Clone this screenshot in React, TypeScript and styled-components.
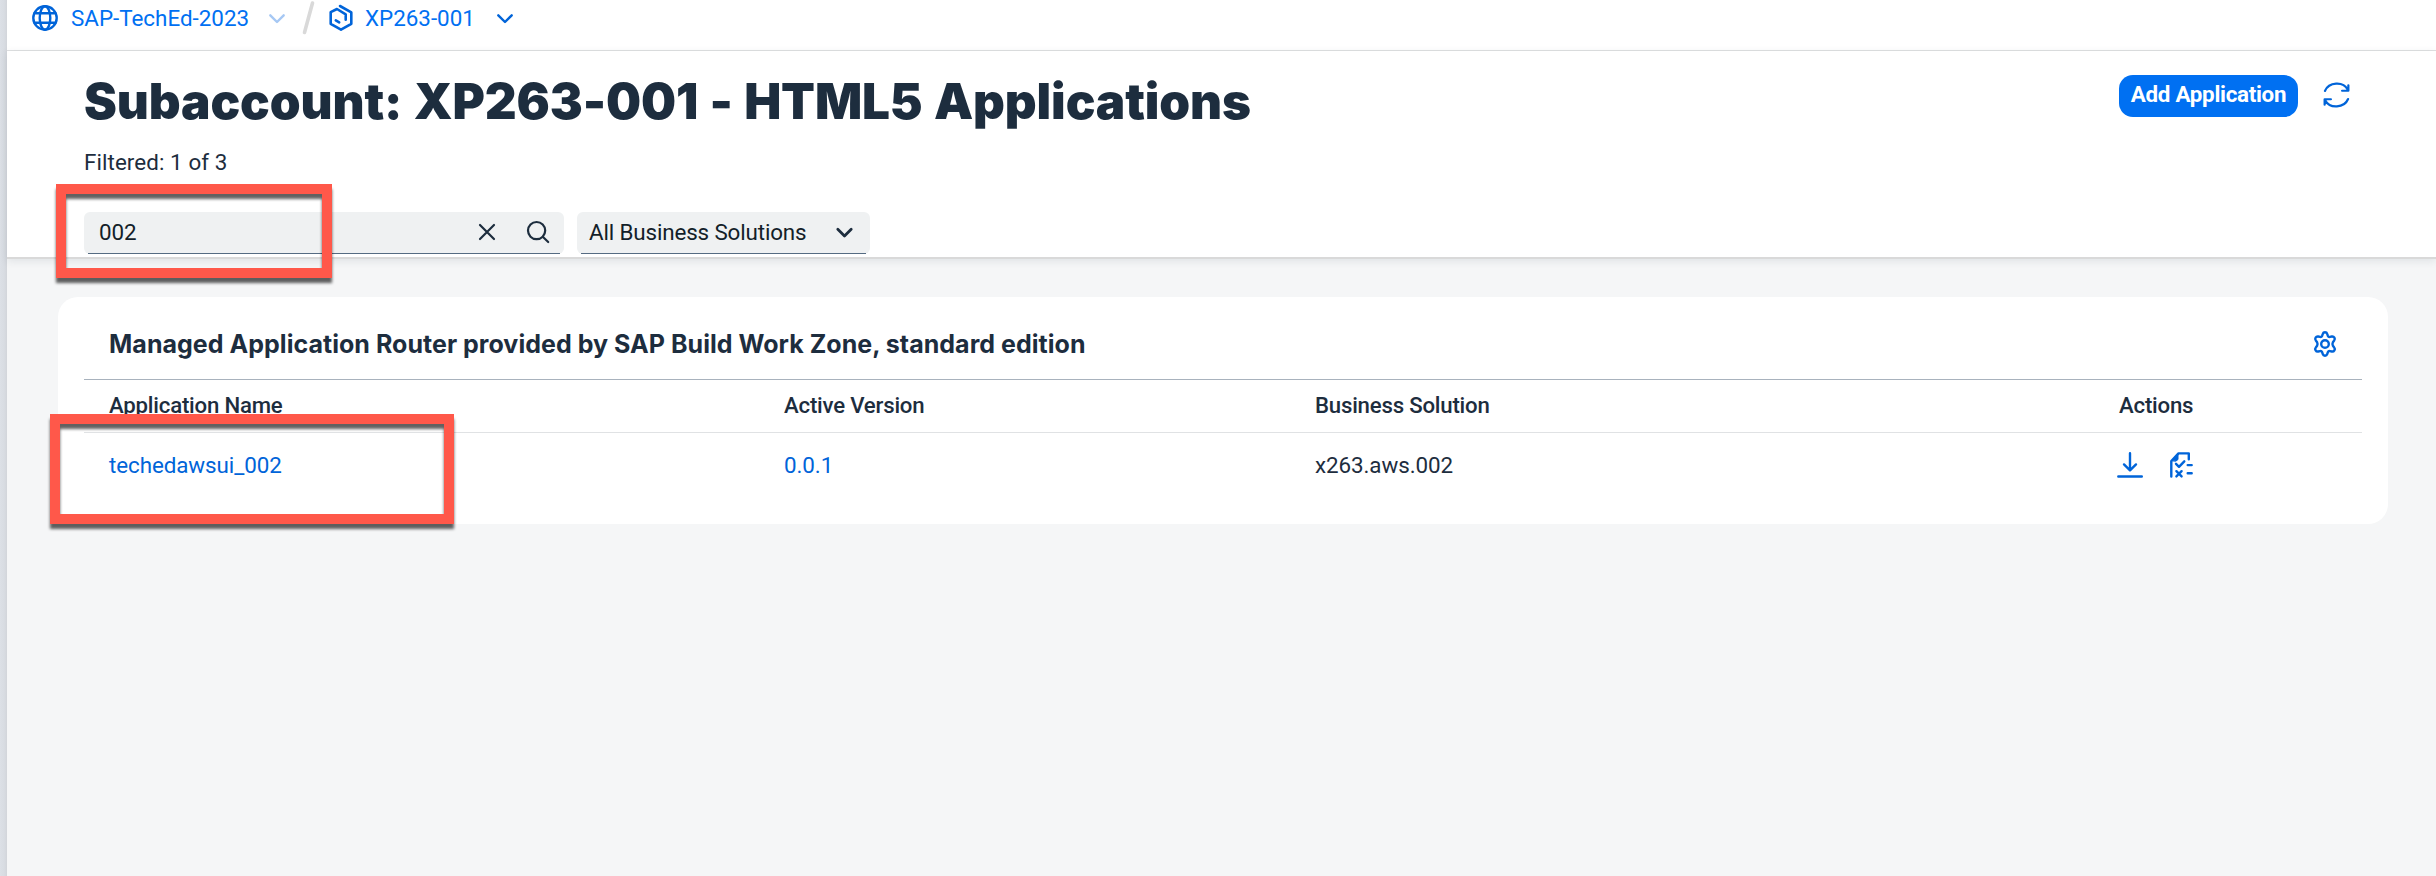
import React from 'react';
import styled, { createGlobalStyle } from 'styled-components';

const Global = createGlobalStyle`
  * { box-sizing: border-box; }
  body { margin: 0; background: #f5f6f7; }
`;

const Shell = styled.div`
  position: relative;
  display: flex;
  width: 2436px;
  height: 876px;
  overflow: hidden;
  background: #f5f6f7;
  font-family: Roboto, 'Liberation Sans', sans-serif;
  font-size: 22.4px;
  color: #1d2d3e;
  white-space: nowrap;
`;

const SideEdge = styled.div`
  flex: none;
  width: 7px;
  background: linear-gradient(to right, #dce0e6, #d8dce2 60%, #d2d5da);
`;

const Main = styled.main`
  flex: 1;
  display: flex;
  flex-direction: column;
`;

const Breadcrumbs = styled.nav`
  display: flex;
  align-items: center;
  height: 51px;
  padding: 0 0 14px 24px;
  background: #fff;
  border-bottom: 1px solid #e0e1e2;
`;

const Crumb = styled.a<{ $width: number }>`
  width: ${p => p.$width}px;
  margin-left: 12px;
  color: #0070f2;
`;

const Icon = styled.svg<{ $color?: string; $stroke?: number }>`
  display: block;
  flex: none;
  overflow: visible;
  fill: none;
  stroke: ${p => p.$color ?? '#0064d9'};
  stroke-width: ${p => p.$stroke ?? 2.4};
  stroke-linecap: round;
  stroke-linejoin: round;
`;

const CrumbArrow = styled(Icon)`
  margin-left: 20px;
`;

const Slash = styled(Icon)`
  margin: 0 15px 0 18px;
`;

const PageHeader = styled.header`
  display: flex;
  justify-content: space-between;
  height: 208px;
  padding: 24px 86px 0 77px;
  background: #fff;
  border-bottom: 2px solid #d9d9d9;
  box-shadow: 0 2px 8px rgba(34, 53, 72, 0.1);
`;

const HeaderContent = styled.div`
  display: flex;
  flex-direction: column;
`;

const Title = styled.h1`
  margin: 0;
  height: 50px;
  line-height: 52px;
  font-family: Inter, sans-serif;
  font-size: 49.4px;
  font-weight: 900;
  font-feature-settings: 'calt' 0;
  letter-spacing: -0.1px;
  word-spacing: 1.5px;
`;

const Count = styled.div`
  margin-top: 22px;
  line-height: 30px;
  letter-spacing: 0.08px;
`;

const Filters = styled.div`
  display: flex;
  gap: 13px;
  margin-top: 35px;
`;

const Field = styled.div<{ $width: number; $inset: number }>`
  position: relative;
  display: flex;
  align-items: center;
  width: ${p => p.$width}px;
  height: 42px;
  padding: 0 15px 2px ${p => p.$inset}px;
  border-radius: 6px;
  background: #eff1f2;
  color: #131e29;

  &::after {
    content: '';
    position: absolute;
    left: 4px;
    right: 4px;
    bottom: 0;
    height: 1px;
    background: #556b82;
  }
`;

const FieldText = styled.span`
  flex: 1;
  letter-spacing: -0.14px;
`;

const SearchIcon = styled(Icon)`
  margin-left: 32px;
`;

const HeaderActions = styled.div`
  display: flex;
  align-items: flex-start;
  gap: 25px;
`;

const AddButton = styled.button`
  width: 179px;
  height: 42px;
  padding: 0 0 4px;
  border: 0;
  border-radius: 14px;
  background: #0070f2;
  color: #fff;
  font: 700 22.4px Roboto, sans-serif;
  letter-spacing: -0.3px;
`;

const RefreshIcon = styled(Icon)`
  margin-top: 7px;
`;

const Card = styled.section`
  width: 2330px;
  height: 227px;
  margin: 38px 0 0 51px;
  padding: 0 26px;
  border-radius: 20px;
  background: #fff;
`;

const CardHead = styled.div`
  display: flex;
  align-items: center;
  justify-content: space-between;
  height: 83px;
  padding: 11px 25px 0 25px;
  border-bottom: 1px solid #a8b2bd;
`;

const CardTitle = styled.h2`
  margin: 0;
  font: 700 25px/34px Inter, sans-serif;
  letter-spacing: 0.035px;
`;

const TableRow = styled.div<{ $head?: boolean }>`
  display: grid;
  grid-template-columns: 675px 531px 804px 1fr;
  align-items: center;
  height: ${p => (p.$head ? 53 : 66)}px;
  padding: 0 0 2px 25px;
  border-bottom: ${p => (p.$head ? '1px solid #e0e2e4' : '0')};
  font-weight: ${p => (p.$head ? 500 : 400)};
  font-size: ${p => (p.$head ? 22.2 : 22.4)}px;
  letter-spacing: ${p => (p.$head ? -0.2 : -0.08)}px;
`;

const Link = styled.a`
  color: #0064d9;
`;

const RowActions = styled.div`
  display: flex;
  align-items: center;
  gap: 27px;
  margin-left: -2px;
`;

const Highlight = styled.div<{ $x: number; $y: number; $w: number; $h: number }>`
  position: absolute;
  left: ${p => p.$x}px;
  top: ${p => p.$y}px;
  width: ${p => p.$w}px;
  height: ${p => p.$h}px;
  border: 10px solid #ff584a;
  filter: drop-shadow(0 5px 1.6px rgba(0, 0, 0, 0.62));
`;

const Chevron = () => <path d="M1.3 1.3 8 8l6.7-6.7" />;

export default function App() {
  return (
    <>
      <Global />
      <Shell>
        <SideEdge />
        <Main>
          <Breadcrumbs>
            <Icon width="28" height="28" viewBox="0 0 28 28">
              <circle cx="14" cy="14" r="11.7" />
              <ellipse cx="14" cy="14" rx="5.3" ry="11.7" />
              <path d="M3.5 9.3h21M3.5 18.7h21" />
            </Icon>
            <Crumb $width={178}>SAP-TechEd-2023</Crumb>
            <CrumbArrow width="16" height="9" viewBox="0 0 16 9" $color="#a6c8f4">
              <Chevron />
            </CrumbArrow>
            <Slash width="11" height="30" viewBox="0 0 11 30" $color="#d9d9d9" $stroke={3.6}>
              <path d="M9.5 0 1.5 29.5" />
            </Slash>
            <Icon width="24" height="26" viewBox="0 0 24 26" $stroke={2.6}>
              <path d="M11 1 22.3 7.400v11.400L12 24.700 1.700 18.800V7.200L8 4l8.700 5.300v5.400M6.800 15.300l3.400 2" />
            </Icon>
            <Crumb $width={112}>XP263-001</Crumb>
            <CrumbArrow width="16" height="9" viewBox="0 0 16 9">
              <Chevron />
            </CrumbArrow>
          </Breadcrumbs>
          <PageHeader>
            <HeaderContent>
              <Title>Subaccount: XP263-001 - HTML5 Applications</Title>
              <Count>Filtered: 1 of 3</Count>
              <Filters>
                <Field $width={480} $inset={15}>
                  <FieldText>002</FieldText>
                  <Icon width="16" height="16" viewBox="0 0 16 16" $color="#1d2d3e" $stroke={2.2}>
                    <path d="m1 1 14 14M15 1 1 15" />
                  </Icon>
                  <SearchIcon width="22" height="22" viewBox="0 0 22 22" $color="#1d2d3e" $stroke={2.2}>
                    <circle cx="9.6" cy="9.6" r="8.6" />
                    <path d="m16 16 5.2 5" />
                  </SearchIcon>
                </Field>
                <Field $width={293} $inset={12}>
                  <FieldText>All Business Solutions</FieldText>
                  <Icon width="20" height="9" viewBox="-1.5 0 20 9" $color="#1d2d3e" $stroke={2.8}>
                    <Chevron />
                  </Icon>
                </Field>
              </Filters>
            </HeaderContent>
            <HeaderActions>
              <AddButton>Add Application</AddButton>
              <RefreshIcon width="27" height="26" viewBox="0 0 28 26" $stroke={2.3}>
                <path d="M2 8.8C6-.8 21-1.5 25.6 7.3M26.3 2.9v5.7h-6.5M26 17.2c-4 9.6-19 10.3-23.6 1.5M1.7 23.1v-5.7h6.5" />
              </RefreshIcon>
            </HeaderActions>
          </PageHeader>
          <Card>
            <CardHead>
              <CardTitle>Managed Application Router provided by SAP Build Work Zone, standard edition</CardTitle>
              <Icon width="24" height="26" viewBox="0 0 24 26">
                <circle cx="12" cy="13" r="3.8" />
                <path d="M9.8 2.9Q10.3 1.3 12 1.3t2.2 1.6l.7 2q.6 1.3 2 1l1.9-.4q1.7-.3 2.6 1.2t-.2 2.8l-1.3 1.7q-.9 1.8 0 3.6l1.3 1.7q1.1 1.3.2 2.8t-2.6 1.2l-1.9-.4q-1.4-.3-2 1l-.7 2Q13.700 24.700 12 24.700t-2.200-1.600l-.7-2q-.6-1.300-2-1l-1.900.4q-1.700.3-2.600-1.200t.2-2.800l1.300-1.700q.9-1.800 0-3.600L2.800 9.500q-1.100-1.300-.2-2.800t2.600-1.200l1.900.4q1.400.3 2-1z" />
              </Icon>
            </CardHead>
            <TableRow $head>
              <span>Application Name</span>
              <span>Active Version</span>
              <span>Business Solution</span>
              <span>Actions</span>
            </TableRow>
            <TableRow>
              <Link>techedawsui_002</Link>
              <Link>0.0.1</Link>
              <span>x263.aws.002</span>
              <RowActions>
                <Icon width="26" height="26" viewBox="0 0 26 26">
                  <path d="M13 1.2v17M7 12.4l6 6 6-6M1.3 24.5h23.5" />
                </Icon>
                <Icon width="23" height="26" viewBox="0 0 23 26">
                  <path d="M1.3 24.5V9L8.5 1.4h10.300v5.800M6 11.800l3 3 5.300-5.500M6.400 19.200l5.200 5.200M11.600 19.200l-5.200 5.200M17.700 13.100h4M17.700 21.300h4" />
                  <path d="M2 8.500 8 2v5.500L6 9z" fill="#0064d9" strokeWidth="1" />
                </Icon>
              </RowActions>
            </TableRow>
          </Card>
        </Main>
        <Highlight $x={56} $y={184} $w={276} $h={94} />
        <Highlight $x={50} $y={414} $w={404} $h={110} />
      </Shell>
    </>
  );
}
